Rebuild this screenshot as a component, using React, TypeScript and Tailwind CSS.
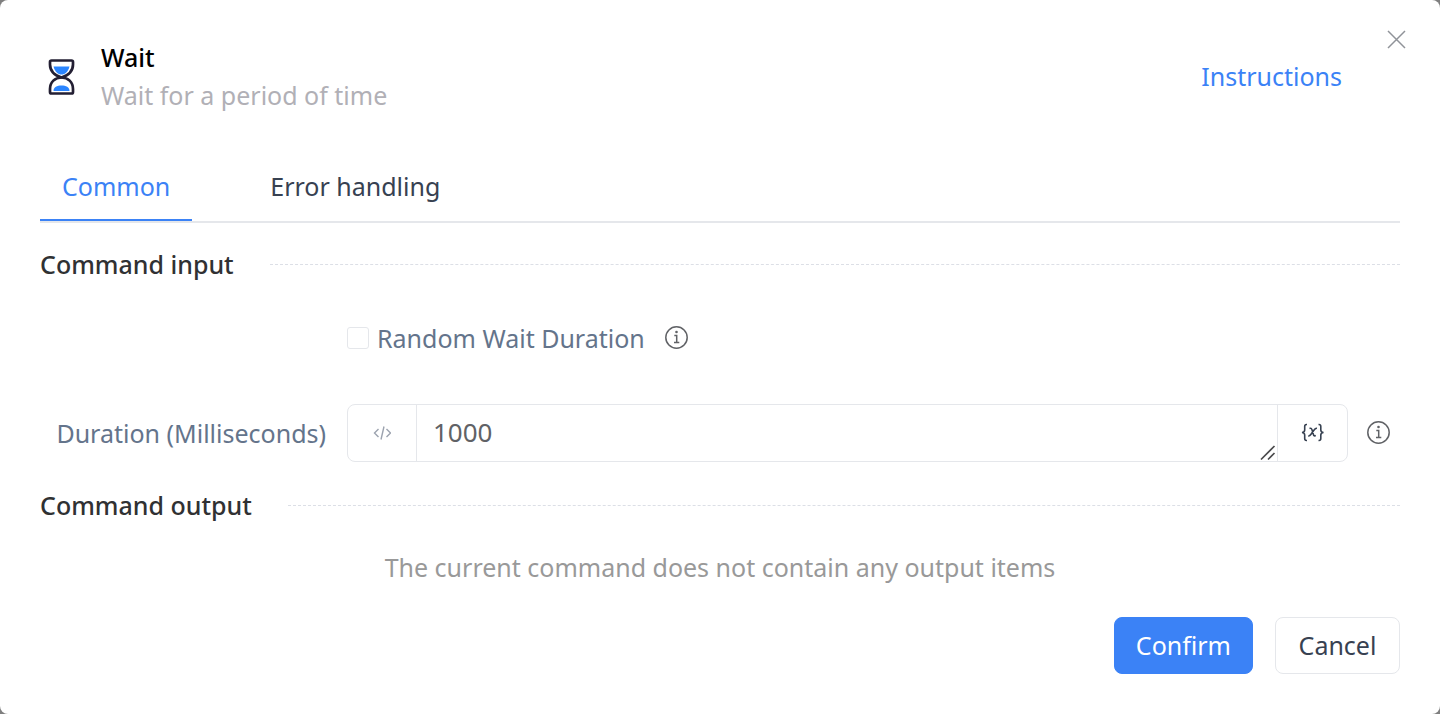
import { useState, type ReactNode } from "react";

function HourglassIcon() {
  return (
    <svg className="h-[38px] w-7 shrink-0" viewBox="0 0 28 38" fill="none" aria-hidden="true">
      <g strokeLinejoin="round">
        <path
          d="M3.500 3.500H23.500Q25 3.500 25 5V7.500C25 14 20 18.500 13.500 20.500C7 18.500 2 14 2 7.500V5Q2 3.500 3.500 3.500Z"
          stroke="#231f33"
          strokeWidth="2.700"
        />
        <path
          d="M3.500 36.500H23.500Q25 36.500 25 35V32C25 25 20 20.500 13.500 20.500C7 20.500 2 25 2 32V35Q2 36.500 3.500 36.500Z"
          stroke="#231f33"
          strokeWidth="2.700"
        />
        <path d="M5.500 9.500H21.500C20 15 17 17.500 13.500 17.500C10 17.500 7 15 5.500 9.500Z" fill="#2b85ff" />
        <path d="M5.500 34C5.500 30 9 28.500 13.500 28.500C18 28.500 21.500 30 21.500 34Z" fill="#2b85ff" />
      </g>
    </svg>
  );
}

function InfoIcon() {
  return (
    <svg className="size-6 shrink-0" viewBox="0 0 24 24" fill="none" stroke="#606266" aria-hidden="true">
      <circle cx="11.500" cy="11.500" r="10.700" strokeWidth="1.500" />
      <path d="M9.300 9.500H11.700V16.500M9 16.500H14.300" strokeWidth="1.500" />
      <circle cx="11.500" cy="6" r="1.300" fill="#606266" stroke="none" />
    </svg>
  );
}

function SectionTitle({ children }: { children: ReactNode }) {
  return (
    <div className="flex items-center gap-9">
      <h2 className="font-medium text-[#303133]">{children}</h2>
      <div className="flex-1 border-t border-dashed border-[#dcdfe6]" />
    </div>
  );
}

const tabs = ["Common", "Error handling"];

export default function App() {
  const [active, setActive] = useState("Common");
  const [duration, setDuration] = useState("1000");

  return (
    <div className="min-h-screen bg-[#7f7f7f]">
      <main
        role="dialog"
        aria-label="Wait"
        className="relative flex min-h-screen flex-col rounded-lg bg-white px-10 pt-[38px] pb-10 font-['Noto_Sans',sans-serif] text-[25px] leading-[38px]"
      >
        <button type="button" aria-label="Close" className="absolute top-[29px] right-[34px]">
          <svg className="size-5" viewBox="0 0 20 20" stroke="#909399" strokeWidth="1.500" aria-hidden="true">
            <path d="M2 2L19 19M19 2L2 19" />
          </svg>
        </button>

        <header className="flex items-center pr-[58px] pl-2">
          <HourglassIcon />
          <div className="ml-[25px] flex-1">
            <h1 className="font-medium text-black">Wait</h1>
            <p className="text-[#b1b0b6]">Wait for a period of time</p>
          </div>
          <a href="#instructions" className="text-[#3b82f6]">
            Instructions
          </a>
        </header>

        <div role="tablist" className="mt-[39px] flex gap-14 border-b-2 border-[#e5e7eb]">
          {tabs.map((tab) => (
            <button
              key={tab}
              type="button"
              role="tab"
              aria-selected={active === tab}
              onClick={() => setActive(tab)}
              className={
                active === tab
                  ? "border-b-2 border-[#3b82f6] px-[22px] py-[14px] text-[#3b82f6]"
                  : "border-b-2 border-transparent px-[22px] py-[14px] text-[#374151]"
              }
            >
              {tab}
            </button>
          ))}
        </div>

        <div className="mt-[22px]">
          <SectionTitle>Command input</SectionTitle>
        </div>

        <div className="mt-9 grid grid-cols-[286px_1fr] gap-x-[21px] gap-y-[47px]">
          <div className="col-start-2 flex items-center">
            <label className="flex items-center gap-2 text-[#64748b]">
              <input
                type="checkbox"
                className="size-[22px] appearance-none rounded-[3px] border border-[#e5e7eb] bg-white checked:bg-[#3b82f6]"
              />
              Random Wait Duration
            </label>
            <span className="ml-5">
              <InfoIcon />
            </span>
          </div>

          <label htmlFor="duration" className="self-center text-right whitespace-nowrap text-[#64748b]">
            Duration (Milliseconds)
          </label>
          <div className="flex items-center pr-[9px]">
            <div className="flex h-[58px] flex-1 overflow-hidden rounded-lg border border-[#e5e7eb]">
              <button
                type="button"
                aria-label="Expression"
                className="flex w-[69px] items-center justify-center border-r border-[#e5e7eb]"
              >
                <svg
                  className="h-3.5 w-[18px]"
                  viewBox="0 0 18 14"
                  fill="none"
                  stroke="#9ca3af"
                  strokeWidth="1.400"
                  aria-hidden="true"
                >
                  <path d="M5.500 3L1.500 7L5.500 11M13.500 3L17.500 7L13.500 11M11 0.500L8 13.500" />
                </svg>
              </button>
              <div className="relative flex flex-1">
                <textarea
                  id="duration"
                  rows={1}
                  value={duration}
                  onChange={(e) => setDuration(e.target.value)}
                  className="flex-1 resize-none overflow-hidden px-4 py-2 text-[26px] leading-[38px] text-[#606266] outline-none"
                />
                <svg
                  className="pointer-events-none absolute right-px bottom-0 size-4"
                  viewBox="0 0 16 16"
                  stroke="#4b4b4d"
                  strokeWidth="1.700"
                  aria-hidden="true"
                >
                  <path d="M1 14.500L14.500 1M8 14.500L14.500 8" />
                </svg>
              </div>
              <button
                type="button"
                aria-label="Insert variable"
                className="flex w-[70px] items-center justify-center border-l border-[#e5e7eb]"
              >
                <svg
                  className="h-5 w-6"
                  viewBox="0 0 24 20"
                  fill="none"
                  stroke="#374151"
                  strokeWidth="1.600"
                  aria-hidden="true"
                >
                  <path d="M6 1.500H5.500C4.200 1.500 3.700 2.200 3.700 3.500V7C3.700 8.500 2.800 9.300 1 9.500C2.800 9.700 3.700 10.500 3.700 12V15.500C3.700 16.800 4.200 17.500 5.500 17.500H6" />
                  <path d="M17.500 1.500H18C19.300 1.500 19.800 2.200 19.800 3.500V7C19.800 8.500 20.700 9.300 22.500 9.500C20.700 9.700 19.800 10.500 19.800 12V15.500C19.800 16.800 19.300 17.500 18 17.500H17.500" />
                  <path d="M8.500 5.500C9.800 4.900 10.500 5.400 11 6.700L12.400 11.500C12.800 12.900 13.500 13.200 14.800 12.600M16 5.300C14.600 5.100 13.800 5.900 12.900 7.200L10 11.300C9.200 12.500 8.400 13.200 7.200 13" />
                </svg>
              </button>
            </div>
            <span className="ml-[19px]">
              <InfoIcon />
            </span>
          </div>
        </div>

        <div className="mt-6">
          <SectionTitle>Command output</SectionTitle>
        </div>
        <p className="mt-6 text-center text-[#999999]">
          The current command does not contain any output items
        </p>

        <footer className="mt-[31px] flex justify-end gap-[22px]">
          <button
            type="button"
            className="min-w-[139px] rounded-lg border border-[#3b82f6] bg-[#3b82f6] px-[21px] pt-2 pb-[9px] text-white"
          >
            Confirm
          </button>
          <button
            type="button"
            className="min-w-[125px] rounded-lg border border-[#e5e7eb] bg-white px-[21px] pt-2 pb-[9px] text-[#374151]"
          >
            Cancel
          </button>
        </footer>
      </main>
    </div>
  );
}
